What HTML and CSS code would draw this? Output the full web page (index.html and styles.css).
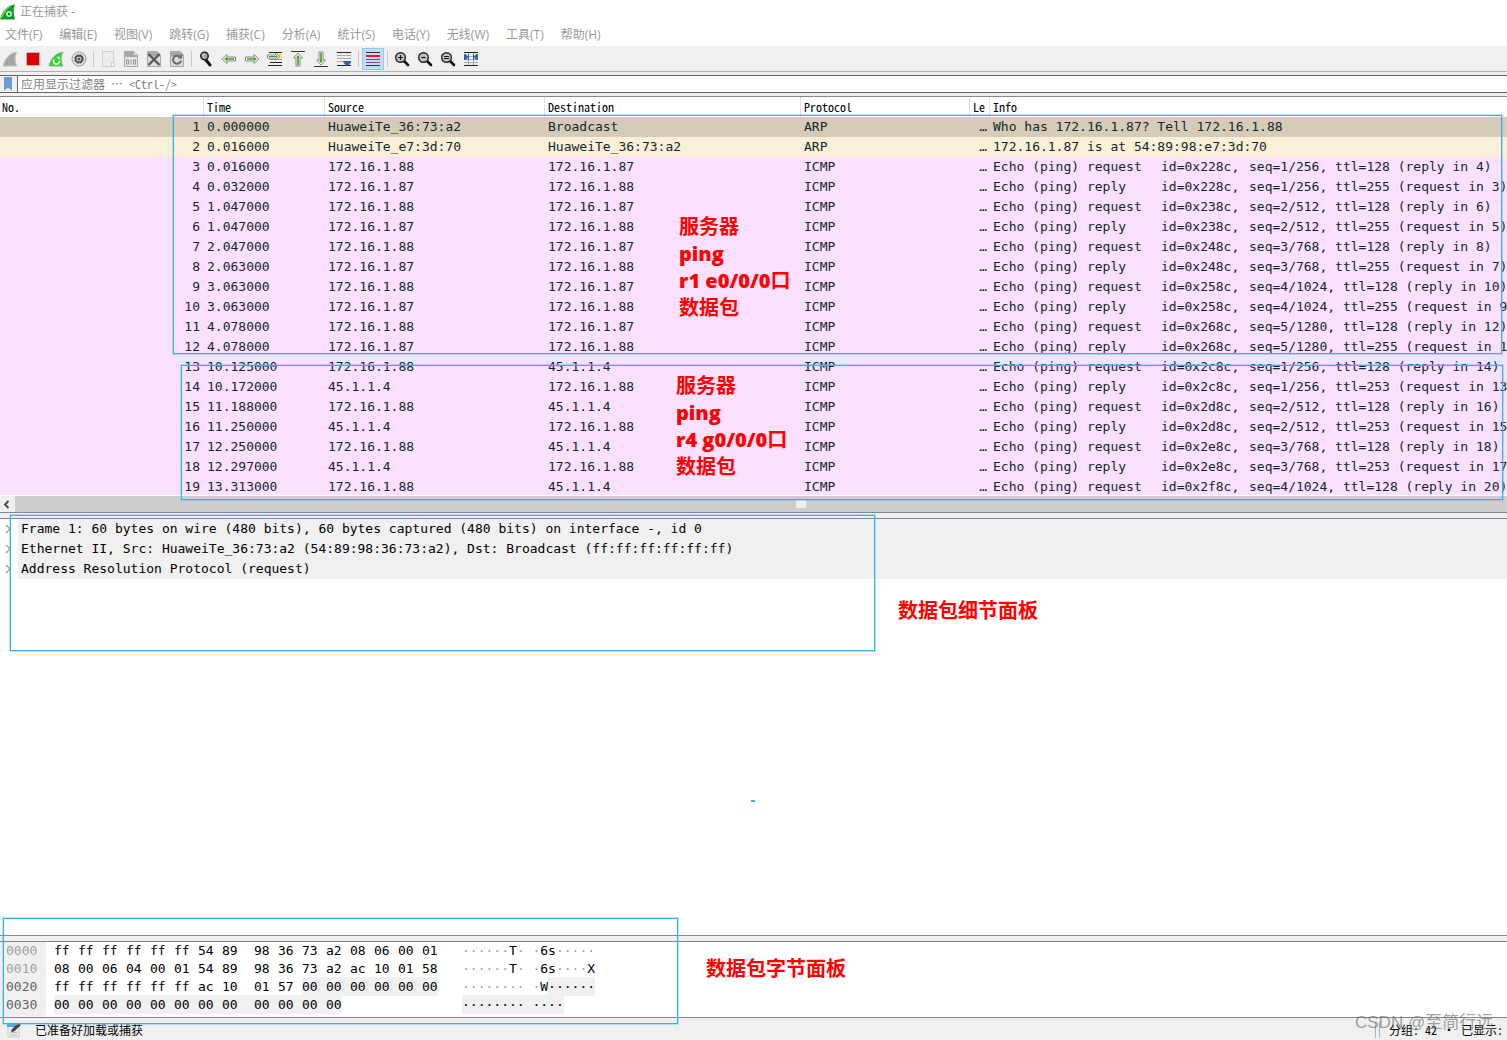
FILE: index.html
```html
<!DOCTYPE html>
<html lang="zh-CN">
<head>
<meta charset="utf-8">
<title>正在捕获 -</title>
<link rel="stylesheet" href="styles.css">
</head>
<body>
<header class="titlebar">
  <svg width="16" height="16" viewBox="0 0 16 16"><path d="M0 15.500C2 7 7 1.500 15 .5C13 5 13.500 10 15 15.500Z" fill="#0f9a22"/><path d="M0 15.500C2 8 6 3 12 1.500C7 5 4 9 3 12.500Z" fill="#5fd85a"/><circle cx="9" cy="10" r="3" fill="#bfe8bf"/><circle cx="9" cy="10" r="1.200" fill="#0f7a1a"/></svg>
  <span>正在捕获 -</span>
</header>
<nav class="menubar">
  <button>文件(F)</button><button>编辑(E)</button><button>视图(V)</button><button>跳转(G)</button><button>捕获(C)</button><button>分析(A)</button><button>统计(S)</button><button>电话(Y)</button><button>无线(W)</button><button>工具(T)</button><button>帮助(H)</button>
</nav>
<div class="toolbar" role="toolbar">
  <button aria-label="开始捕获"><svg viewBox="0 0 16 16"><path d="M1 15C3 7 8 2 15 1C12.500 5 12.500 10 15 15Z" fill="#a4a4a4" stroke="#c6c6c6"/></svg></button>
  <button aria-label="停止捕获"><svg viewBox="0 0 16 16"><path d="M1.500 1.500h13v13h-13z" fill="#d00" stroke="#c9b4b4"/></svg></button>
  <button aria-label="重新开始"><svg viewBox="0 0 16 16"><path d="M1 15C3 7 8 2 15 1C12.500 5 12.500 10 15 15Z" fill="#1fe01f" stroke="#9aa89a"/><path d="M6 8.500a3 3 0 1 0 5.500 1.500" fill="none" stroke="#fff" stroke-width="1.600"/><path d="M8.500 6l3-.5v4z" fill="#fff"/></svg></button>
  <button aria-label="捕获选项"><svg viewBox="0 0 16 16"><circle cx="8" cy="8" r="7" fill="#e4e4e4" stroke="#999"/><circle cx="8" cy="8" r="3.700" fill="#ddd" stroke="#555" stroke-width="2.200" stroke-dasharray="2.200 .7"/><circle cx="8" cy="8" r="3.300" fill="none" stroke="#555" stroke-width="1.400"/><circle cx="8" cy="8" r="1.500" fill="#555"/></svg></button>
  <i class="sep"></i>
  <button aria-label="打开"><svg viewBox="0 0 16 16"><path d="M2.500.5h11v15h-11z" fill="#ececec" stroke="#cfcfcf"/><path d="M11.500 11.500h3v4h-3z" fill="#f4f4f4" stroke="#ccc"/></svg></button>
  <button aria-label="保存"><svg viewBox="0 0 16 16"><path d="M1.500.5h9.500l3.500 3.500v11.500h-13z" fill="#e8e8e8" stroke="#aaa"/><path d="M1 .5h10l3.500 3.500v2H1z" fill="#a8a8a8"/><path d="M11 .5v3.500h3.500" fill="#ddd"/><g fill="none" stroke="#999" stroke-width="1.100"><path d="M3.500 9h2v4h-2zM8 8.500v5M10.500 9h2v4h-2z"/></g></svg></button>
  <button aria-label="关闭"><svg viewBox="0 0 16 16"><path d="M1.500.5h9.500l3.500 3.500v11.500h-13z" fill="#ddd" stroke="#aaa"/><path d="M1 .5h10l3.500 3.500v1.500H1z" fill="#a8a8a8"/><path d="M2.500 3l11 11M13.500 3l-11 11" stroke="#555" stroke-width="2.200"/></svg></button>
  <button aria-label="重新加载"><svg viewBox="0 0 16 16"><path d="M1.500.5h9.500l3.500 3.500v11.500h-13z" fill="#ddd" stroke="#aaa"/><path d="M1 .5h10l3.500 3.500v1.500H1z" fill="#a8a8a8"/><path d="M10.500 5.500a4 4 0 1 0 1.500 4" fill="none" stroke="#666" stroke-width="2"/><path d="M8.500 7.500h4.500v-5z" fill="#666"/></svg></button>
  <i class="sep"></i>
  <button aria-label="查找"><svg viewBox="0 0 16 16"><path d="M8 9l4 5" stroke="#111" stroke-width="3" stroke-linecap="round"/><circle cx="6.500" cy="5" r="3.700" fill="#aaa" stroke="#222" stroke-width="1.500"/><path d="M4.500 5a2 2 0 0 1 2-2" fill="none" stroke="#eee"/></svg></button>
  <button aria-label="上一个"><svg viewBox="0 0 16 16"><path d="M1 8l5-4.500v2.500h8.500v4H6v2.500z" fill="#fff" stroke="#858585"/><path d="M3 8l3-2v1.300h7v1.500H6V10z" fill="#3f9f0c"/></svg></button>
  <button aria-label="下一个"><svg viewBox="0 0 16 16"><path d="M15 8l-5-4.500v2.500H1.500v4H10v2.500z" fill="#fff" stroke="#858585"/><path d="M13 8l-3-2v1.300H3v1.500h7V10z" fill="#3f9f0c"/></svg></button>
  <button aria-label="转到分组"><svg viewBox="0 0 16 16"><path d="M2 1.500h13M3 11.500h12M1 14.500h14" stroke="#222"/><path d="M2 8.500h13" stroke="#999"/><path d="M11 3h4v4h-4z" fill="#ffe45a"/><path d="M13 5.500L8.500 2v2H.5v3h8v2z" fill="#fff" stroke="#858585"/><path d="M11 5.500L9 4v1H2v1h7v1z" fill="#3f9f0c"/></svg></button>
  <button aria-label="首个分组"><svg viewBox="0 0 16 16"><path d="M1 .5h14" stroke="#333"/><path d="M8 2l4.500 5H10v8H6V7H3.500z" fill="#fff" stroke="#858585"/><path d="M8 4l2 2.500H8.800V14H7.200V6.500H6z" fill="#3f9f0c"/></svg></button>
  <button aria-label="最后分组"><svg viewBox="0 0 16 16"><path d="M1 15.500h14" stroke="#333"/><path d="M8 14l4.500-5H10V1H6v8H3.500z" fill="#fff" stroke="#858585"/><path d="M8 12l2-2.500H8.800V2H7.200v7.500H6z" fill="#3f9f0c"/></svg></button>
  <button aria-label="自动滚动"><svg viewBox="0 0 16 16"><path d="M1 1.500h14M1 14.500h14" stroke="#222"/><path d="M1 4.500h14M1 7.500h14M1 10.500h8" stroke="#aaa"/><path d="M7.500 10h7.500v1.500l-2.500 3h-2.500l-2.500-3z" fill="#2f62aa"/></svg></button>
  <i class="sep"></i>
  <button class="pressed" aria-label="着色" aria-pressed="true"><svg viewBox="0 0 16 16"><path d="M1 1.500h14M1 14.500h14" stroke="#333"/><path d="M1 5h14" stroke="#f01818" stroke-width="2"/><path d="M1 8.500h14" stroke="#3465a4"/><path d="M1 11.500h14" stroke="#75507b"/></svg></button>
  <i class="sep"></i>
  <button aria-label="放大"><svg viewBox="0 0 16 16"><path d="M10 10l4 4" stroke="#111" stroke-width="2.600" stroke-linecap="round"/><circle cx="6.500" cy="6.500" r="4.800" fill="#c4c4c4" stroke="#222" stroke-width="1.400"/><path d="M4 6.500h5M6.500 4v5" stroke="#111" stroke-width="1.200"/></svg></button>
  <button aria-label="缩小"><svg viewBox="0 0 16 16"><path d="M10 10l4 4" stroke="#111" stroke-width="2.600" stroke-linecap="round"/><circle cx="6.500" cy="6.500" r="4.800" fill="#c4c4c4" stroke="#222" stroke-width="1.400"/><path d="M4.500 6.500h4" stroke="#111" stroke-width="1.200"/></svg></button>
  <button aria-label="原始大小"><svg viewBox="0 0 16 16"><path d="M10 10l4 4" stroke="#111" stroke-width="2.600" stroke-linecap="round"/><circle cx="6.500" cy="6.500" r="4.800" fill="#c4c4c4" stroke="#222" stroke-width="1.400"/><path d="M4 5.500h5M4 7.500h5" stroke="#111"/></svg></button>
  <button aria-label="调整列宽"><svg viewBox="0 0 16 16"><path d="M1 1.500h14M1 14.500h14" stroke="#222"/><path d="M1 5.500h14M1 8.500h14M1 11.500h14M5.500 2v12M10.500 2v12" stroke="#aaa"/><path d="M1 3h1.500l3 3-3 3H1zM15 3h-1.500l-3 3 3 3H15z" fill="#2f62aa"/><path d="M5.500 3v6M10.500 3v6" stroke="#2f62aa"/></svg></button>
</div>
<div class="filter">
  <button class="bookmark" aria-label="书签"><svg width="10" height="14" viewBox="0 0 10 14"><path d="M1 0h8v14L5 10.500L1 14z" fill="#6c9bd0"/></svg></button>
  <input type="text" aria-label="显示过滤器" placeholder="应用显示过滤器 ⋯ &lt;Ctrl-/&gt;">
</div>
<main class="panes">
<section class="packets">
<div class="packet-view">
<table>
<colgroup><col class="c-no"><col class="c-time"><col class="c-src"><col class="c-dst"><col class="c-proto"><col class="c-len"><col></colgroup>
<thead><tr><th>No.</th><th>Time</th><th>Source</th><th>Destination</th><th>Protocol</th><th>Le</th><th>Info</th></tr></thead>
<tbody>
<tr class="arp selected"><td>1</td><td>0.000000</td><td>HuaweiTe_36:73:a2</td><td>Broadcast</td><td>ARP</td><td>…</td><td>Who has 172.16.1.87? Tell 172.16.1.88</td></tr>
<tr class="arp"><td>2</td><td>0.016000</td><td>HuaweiTe_e7:3d:70</td><td>HuaweiTe_36:73:a2</td><td>ARP</td><td>…</td><td>172.16.1.87 is at 54:89:98:e7:3d:70</td></tr>
<tr><td>3</td><td>0.016000</td><td>172.16.1.88</td><td>172.16.1.87</td><td>ICMP</td><td>…</td><td><span>Echo (ping) request  </span><span>id=0x228c, </span>seq=1/256, ttl=128 (reply in 4)</td></tr>
<tr><td>4</td><td>0.032000</td><td>172.16.1.87</td><td>172.16.1.88</td><td>ICMP</td><td>…</td><td><span>Echo (ping) reply    </span><span>id=0x228c, </span>seq=1/256, ttl=255 (request in 3)</td></tr>
<tr><td>5</td><td>1.047000</td><td>172.16.1.88</td><td>172.16.1.87</td><td>ICMP</td><td>…</td><td><span>Echo (ping) request  </span><span>id=0x238c, </span>seq=2/512, ttl=128 (reply in 6)</td></tr>
<tr><td>6</td><td>1.047000</td><td>172.16.1.87</td><td>172.16.1.88</td><td>ICMP</td><td>…</td><td><span>Echo (ping) reply    </span><span>id=0x238c, </span>seq=2/512, ttl=255 (request in 5)</td></tr>
<tr><td>7</td><td>2.047000</td><td>172.16.1.88</td><td>172.16.1.87</td><td>ICMP</td><td>…</td><td><span>Echo (ping) request  </span><span>id=0x248c, </span>seq=3/768, ttl=128 (reply in 8)</td></tr>
<tr><td>8</td><td>2.063000</td><td>172.16.1.87</td><td>172.16.1.88</td><td>ICMP</td><td>…</td><td><span>Echo (ping) reply    </span><span>id=0x248c, </span>seq=3/768, ttl=255 (request in 7)</td></tr>
<tr><td>9</td><td>3.063000</td><td>172.16.1.88</td><td>172.16.1.87</td><td>ICMP</td><td>…</td><td><span>Echo (ping) request  </span><span>id=0x258c, </span>seq=4/1024, ttl=128 (reply in 10)</td></tr>
<tr><td>10</td><td>3.063000</td><td>172.16.1.87</td><td>172.16.1.88</td><td>ICMP</td><td>…</td><td><span>Echo (ping) reply    </span><span>id=0x258c, </span>seq=4/1024, ttl=255 (request in 9)</td></tr>
<tr><td>11</td><td>4.078000</td><td>172.16.1.88</td><td>172.16.1.87</td><td>ICMP</td><td>…</td><td><span>Echo (ping) request  </span><span>id=0x268c, </span>seq=5/1280, ttl=128 (reply in 12)</td></tr>
<tr><td>12</td><td>4.078000</td><td>172.16.1.87</td><td>172.16.1.88</td><td>ICMP</td><td>…</td><td><span>Echo (ping) reply    </span><span>id=0x268c, </span>seq=5/1280, ttl=255 (request in 11)</td></tr>
<tr><td>13</td><td>10.125000</td><td>172.16.1.88</td><td>45.1.1.4</td><td>ICMP</td><td>…</td><td><span>Echo (ping) request  </span><span>id=0x2c8c, </span>seq=1/256, ttl=128 (reply in 14)</td></tr>
<tr><td>14</td><td>10.172000</td><td>45.1.1.4</td><td>172.16.1.88</td><td>ICMP</td><td>…</td><td><span>Echo (ping) reply    </span><span>id=0x2c8c, </span>seq=1/256, ttl=253 (request in 13)</td></tr>
<tr><td>15</td><td>11.188000</td><td>172.16.1.88</td><td>45.1.1.4</td><td>ICMP</td><td>…</td><td><span>Echo (ping) request  </span><span>id=0x2d8c, </span>seq=2/512, ttl=128 (reply in 16)</td></tr>
<tr><td>16</td><td>11.250000</td><td>45.1.1.4</td><td>172.16.1.88</td><td>ICMP</td><td>…</td><td><span>Echo (ping) reply    </span><span>id=0x2d8c, </span>seq=2/512, ttl=253 (request in 15)</td></tr>
<tr><td>17</td><td>12.250000</td><td>172.16.1.88</td><td>45.1.1.4</td><td>ICMP</td><td>…</td><td><span>Echo (ping) request  </span><span>id=0x2e8c, </span>seq=3/768, ttl=128 (reply in 18)</td></tr>
<tr><td>18</td><td>12.297000</td><td>45.1.1.4</td><td>172.16.1.88</td><td>ICMP</td><td>…</td><td><span>Echo (ping) reply    </span><span>id=0x2e8c, </span>seq=3/768, ttl=253 (request in 17)</td></tr>
<tr><td>19</td><td>13.313000</td><td>172.16.1.88</td><td>45.1.1.4</td><td>ICMP</td><td>…</td><td><span>Echo (ping) request  </span><span>id=0x2f8c, </span>seq=4/1024, ttl=128 (reply in 20)</td></tr>
</tbody>
</table>
</div>
<div class="scrollbar"><button aria-label="向左滚动"><svg width="7" height="9" viewBox="0 0 7 9"><path d="M5.500 1L2 4.500L5.500 8" fill="none" stroke="#444" stroke-width="1.800"/></svg></button><span class="track"><span class="grip"></span></span></div>
</section>
<div class="splitter"></div>
<section class="details">
  <ul>
    <li><svg width="6" height="10" viewBox="0 0 6 10"><path d="M1 1l4 4-4 4" fill="none" stroke="#a0a0a0" stroke-width="1.400"/></svg><span>Frame 1: 60 bytes on wire (480 bits), 60 bytes captured (480 bits) on interface -, id 0</span></li>
    <li><svg width="6" height="10" viewBox="0 0 6 10"><path d="M1 1l4 4-4 4" fill="none" stroke="#a0a0a0" stroke-width="1.400"/></svg><span>Ethernet II, Src: HuaweiTe_36:73:a2 (54:89:98:36:73:a2), Dst: Broadcast (ff:ff:ff:ff:ff:ff)</span></li>
    <li><svg width="6" height="10" viewBox="0 0 6 10"><path d="M1 1l4 4-4 4" fill="none" stroke="#a0a0a0" stroke-width="1.400"/></svg><span>Address Resolution Protocol (request)</span></li>
  </ul>
</section>
<div class="splitter"></div>
<section class="bytes">
  <pre class="offsets">0000
0010
<b>0020
0030</b></pre>
  <pre class="hex">ff&#9;ff&#9;ff&#9;ff&#9;ff&#9;ff&#9;54&#9;89
08&#9;00&#9;06&#9;04&#9;00&#9;01&#9;54&#9;89
ff&#9;ff&#9;ff&#9;ff&#9;ff&#9;ff&#9;ac&#9;10
<mark>00&#9;00&#9;00&#9;00&#9;00&#9;00&#9;00&#9;00&#9; </mark></pre>
  <pre class="hex">98&#9;36&#9;73&#9;a2&#9;08&#9;06&#9;00&#9;01
98&#9;36&#9;73&#9;a2&#9;ac&#9;10&#9;01&#9;58
01&#9;57&#9;<mark>00&#9;00&#9;00&#9;00&#9;00&#9;00</mark>
<mark>00&#9;00&#9;00&#9;00</mark></pre>
  <pre class="ascii"><i>······</i>T<i>· ·</i>6s<i>·····</i>
<i>······</i>T<i>· ·</i>6s<i>····</i>X
<i>········ ·</i>W<mark>······</mark>
<mark>········ ····</mark></pre>
</section>
</main>
<footer class="statusbar">
  <svg width="14" height="15" viewBox="0 0 14 15"><path d="M1 2h11v12H1z" fill="#e9eeee" stroke="#c5cccc"/><path d="M3 7h6M3 9.500h7M3 12h7" stroke="#b5bcbc"/><path d="M0 1h9v3H0z" fill="#4fa8d0"/><path d="M4 9l1-3L11.500 0 14 2 7 8.500z" fill="#444"/></svg>
  <span>已准备好加载或捕获</span>
  <i class="grip-lines"></i>
  <span>分组: 42 <span class="dot">·</span> 已显示:</span>
</footer>
<div class="notes">
  <div class="box list-a"></div>
  <div class="box list-b"></div>
  <div class="box detail-box"></div>
  <div class="box byte-box"></div>
  <div class="speck"></div>
  <p class="note note-a">服务器<br><b>ping</b><br><b>r1 e0/0/0</b>口<br>数据包</p>
  <p class="note note-b">服务器<br><b>ping</b><br><b>r4 g0/0/0</b>口<br>数据包</p>
  <p class="note note-c">数据包细节面板</p>
  <p class="note note-d">数据包字节面板</p>
  <p class="watermark">CSDN @至简行远</p>
</div>
</body>
</html>
```
FILE: styles.css
```css
* { box-sizing: border-box; }
:root {
  --mono: "DejaVu Sans Mono", "Noto Sans CJK SC", monospace;
  --song: "Noto Sans Mono CJK SC", "Noto Sans CJK SC", monospace;
  --ui: "Open Sans", "Noto Sans CJK SC", sans-serif;
  --face: #f0f0f0;
  --edge: #828790;
}
body {
  position: relative;
  display: flex;
  flex-direction: column;
  height: 100vh;
  margin: 0;
  overflow: hidden;
  background: #fff;
  color: #000;
  font: 12px/16px var(--ui);
}
button { padding: 0; border: 0; background: none; font: inherit; color: inherit; }
svg { display: block; flex: none; }

.titlebar { display: flex; align-items: center; gap: 4px; height: 23px; color: #999; }
.menubar { display: flex; gap: 17px; height: 24px; padding: 1px 5px 0; color: #999; border-bottom: 1px solid #f0f0f0; }

.toolbar {
  display: flex;
  align-items: center;
  gap: 1px;
  height: 25px;
  margin-left: -1px;
  background: var(--face);
  border-bottom: 1px solid #b0b0b0;
}
.toolbar button { display: grid; place-items: center; width: 22px; height: 22px; }
.toolbar svg { width: 16px; height: 16px; }
.toolbar .pressed { background: #c2dcf3; outline: 1px solid #90c8f6; outline-offset: -1px; }
.sep { width: 5px; height: 16px; background: linear-gradient(#c8c8c8, #c8c8c8) center / 1px 100% no-repeat; }

.filter { display: flex; height: 24px; padding: 3px 0; background: var(--face); }
.bookmark { display: grid; place-items: center; width: 18px; padding-right: 1px; border: solid #646464; border-width: 1px 1px 1px 0; }
.filter input { flex: 1; min-width: 0; padding: 0 3px; border: solid #646464; border-width: 1px 0; border-radius: 0; background: #fff; font: 12px/16px var(--song); outline: 0; }
.filter input::placeholder { color: #7f7f7f; opacity: 1; }

.panes {
  display: grid;
  flex: 1;
  grid-template-columns: minmax(0, 1fr);
  grid-template-rows: minmax(0, 417fr) 5px minmax(0, 418fr) 5px 77px;
  min-height: 0;
}
.packets { display: flex; flex-direction: column; border: solid var(--edge); border-width: 1px 0; }
.packet-view { flex: 1; min-height: 0; overflow: hidden; border-bottom: 1px solid #fff; }
table { width: 100%; table-layout: fixed; border-collapse: collapse; }
.c-no { width: 203px; }
.c-time { width: 121px; }
.c-src { width: 220px; }
.c-dst { width: 256px; }
.c-proto { width: 169px; }
.c-len { width: 20px; }
th { height: 20px; padding: 0 0 0 4px; overflow: hidden; background: linear-gradient(#e2e2e2, #e2e2e2) left / 1px 100% no-repeat; font: 12px/20px var(--song); text-align: left; }
th:first-child { padding-left: 2px; background: none; }
td { height: 20px; padding: 0 0 0 4px; overflow: hidden; white-space: pre; font: 13px/20px var(--mono); color: #12272e; }
td:first-child { padding: 0 3px 0 0; text-align: right; }
td:nth-child(6) { padding: 0 2px 0 0; text-align: right; }
td span { display: inline-block; min-width: 88px; vertical-align: top; }
td span:first-child { min-width: 168px; }
tbody tr { background: #fce0ff; }
tbody .arp { background: #faf0d7; }
tbody .selected { background: #d5cbb6; }

.scrollbar { display: flex; height: 16px; background: var(--face); }
.scrollbar button { display: grid; place-items: center; width: 15px; padding-right: 3px; }
.track { display: flex; flex: 1; justify-content: center; padding: 4px 0 4px 80px; background: #cdcdcd; }
.grip { width: 10px; background: var(--face); }
.splitter { background: var(--face); }

.details { border: solid var(--edge); border-width: 1px 0; overflow: hidden; }
.details ul { margin: 0; padding: 0; list-style: none; }
.details li { display: flex; align-items: center; gap: 7px; padding-left: 5px; }
.details li span { flex: 1; padding-left: 3px; background: var(--face); white-space: pre; font: 13px/20px var(--mono); }

.bytes { display: flex; border: solid var(--edge); border-width: 1px 0; }
.bytes pre { margin: 0; font: 13px/18px var(--mono); }
.bytes .offsets { width: 54px; padding-left: 6px; background: linear-gradient(var(--face), var(--face)) left / 46px 100% no-repeat; color: #a0a0a0; }
.offsets b { font-weight: 400; color: #646464; }
.bytes .hex { width: 200px; tab-size: 24px; }
.bytes .hex + .hex { width: 208px; }
.ascii i { font-style: normal; color: #a0a0a0; }
mark { padding: 2px 0; background: var(--face); color: inherit; }

.statusbar { display: flex; align-items: center; height: 22px; padding: 2px 4px 0 7px; background: var(--face); font: 12px/16px var(--song); white-space: pre; }
.statusbar > span:first-of-type { flex: 1; padding-left: 14px; }
.grip-lines { width: 5px; height: 16px; margin-right: 9px; border: solid #b0b0b0; border-width: 0 1px; }
.dot { display: inline-block; width: 12px; text-align: center; }

.notes { position: absolute; inset: 0; pointer-events: none; }
.box { position: absolute; border: 1px solid #2fb4e8; box-shadow: 0 0 0 1px rgba(80, 190, 240, .4); }
.list-a { left: 173px; top: 115px; width: 1329px; height: 239px; }
.list-b { left: 181px; top: 365px; width: 1322px; height: 135px; }
.detail-box { left: 10px; top: 515px; width: 865px; height: 136px; }
.byte-box { left: 3px; top: 918px; width: 675px; height: 106px; }
.speck { position: absolute; left: 751px; top: 800px; width: 4px; height: 2px; background: #2fb4e8; }
.note { position: absolute; margin: 0; color: #f00; font: 700 20px/27px "Open Sans", "Noto Sans CJK SC", sans-serif; white-space: nowrap; }
.note b { font-weight: 800; }
.note-a { left: 679px; top: 213px; }
.note-b { left: 676px; top: 372px; }
.note-c { left: 898px; top: 597px; }
.note-d { left: 706px; top: 955px; }
.watermark { position: absolute; left: 1355px; top: 1009px; margin: 0; color: rgba(110, 110, 110, .65); font: 17px/27px "Liberation Sans", "Noto Sans CJK SC", sans-serif; white-space: nowrap; }
```
